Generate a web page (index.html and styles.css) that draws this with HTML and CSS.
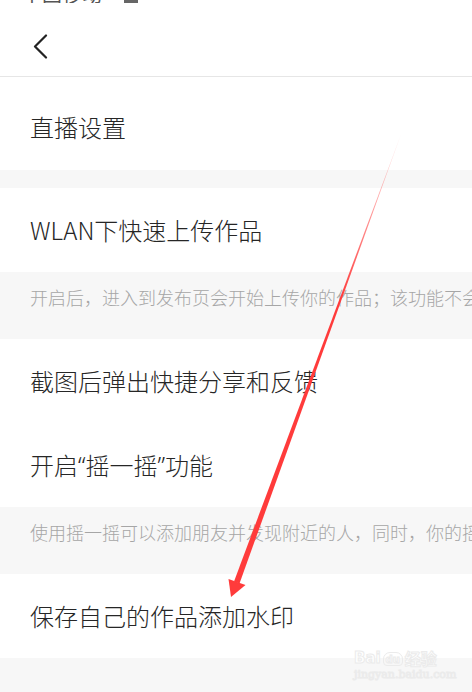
FILE: index.html
```html
<!DOCTYPE html>
<html lang="zh-CN">
<head>
  <meta charset="UTF-8">
  <meta name="viewport" content="width=device-width, initial-scale=1.0">
  <title>通用设置</title>
  <link rel="stylesheet" href="styles.css">
</head>
<body>
  <div class="page">
    <!-- status bar, mostly cut off at the top -->
    <div class="status-bar">
      <span class="carrier">中国移动</span>
      <span class="battery"></span>
    </div>

    <div class="header">
      <svg class="back" width="16" height="26" viewBox="0 0 16 26">
        <polyline points="13,1.5 2,12.5 13,23.5" fill="none" stroke="#222" stroke-width="2.2" stroke-linecap="round" stroke-linejoin="round"/>
      </svg>
    </div>

    <div class="row row-first">直播设置</div>
    <div class="spacer"></div>

    <div class="row">WLAN下快速上传作品</div>
    <div class="desc">开启后，进入到发布页会开始上传你的作品；该功能不会消耗你的流量</div>

    <div class="row">截图后弹出快捷分享和反馈</div>
    <div class="row">开启<span class="q">“</span>摇一摇<span class="q">”</span>功能</div>
    <div class="desc">使用摇一摇可以添加朋友并发现附近的人，同时，你的摇一摇记录将会保留</div>

    <div class="row">保存自己的作品添加水印</div>
    <div class="footer"></div>

    <!-- annotation arrow drawn over the screenshot -->
    <svg class="arrow" width="472" height="692" viewBox="0 0 472 692">
      <defs>
        <linearGradient id="fade" gradientUnits="userSpaceOnUse" x1="401" y1="133" x2="340" y2="300">
          <stop offset="0" stop-color="#ff3b3b" stop-opacity="0.1"/>
          <stop offset="1" stop-color="#ff3b3b" stop-opacity="1"/>
        </linearGradient>
      </defs>
      <polygon points="401.5,133 239.5,583.5 234,581.5" fill="url(#fade)"/>
      <polygon points="228.5,579 245.5,585 231,597" fill="#ff3b3b"/>
    </svg>

    <!-- watermark -->
    <div class="watermark">
      <div class="wm-top">
        <span class="wm-bai">Bai</span>
        <span class="wm-paw">du</span>
        <span class="wm-jy">经验</span>
      </div>
      <div class="wm-url">jingyan.baidu.com</div>
    </div>
  </div>
</body>
</html>
```

FILE: styles.css
```css
body {
  margin: 0;
  font-family: "Noto Sans CJK SC", "Noto Sans", sans-serif;
  background: #fff;
  color: #222;
}

.page {
  position: relative;
  width: 472px;
  height: 692px;
  overflow: hidden;
  background: #f7f7f7;
}

.status-bar {
  height: 3px;
  overflow: hidden;
  background: #fff;
  display: flex;
  align-items: flex-end;
  padding-left: 22px;
  gap: 22px;
}

.carrier {
  font-size: 20px;
  line-height: 20px;
  color: #555;
  margin-bottom: -1px;
  flex: none;
}

.battery {
  width: 14px;
  height: 3px;
  background: #666;
  flex: none;
}

.header {
  height: 74px;
  background: #fff;
  border-bottom: 1px solid #e6e6e6;
  display: flex;
  align-items: center;
  padding-left: 33px;
  padding-top: 14px;
  box-sizing: border-box;
}

.back {
  display: block;
}

.row {
  height: 84px;
  background: #fff;
  display: flex;
  align-items: center;
  padding-left: 30px;
  font-size: 24px;
  line-height: 24px;
  font-weight: 300;
  color: #262626;
  white-space: nowrap;
}

.row-first {
  height: 93px;
  box-sizing: border-box;
  padding-top: 6px;
}

.q {
  font-family: "Noto Sans", sans-serif;
}

.spacer {
  height: 18px;
}

.desc {
  height: 67px;
  box-sizing: border-box;
  padding: 14px 0 0 30px;
  font-size: 18px;
  line-height: 22px;
  font-weight: 300;
  color: #a6a6a6;
  white-space: nowrap;
  overflow: hidden;
}

.footer {
  height: 33px;
}

.arrow {
  position: absolute;
  left: 0;
  top: 0;
  pointer-events: none;
}

.watermark {
  position: absolute;
  left: 354px;
  top: 640px;
  color: #fff;
  -webkit-text-stroke: 1px #ebebeb;
}

.wm-top {
  display: flex;
  align-items: flex-end;
  height: 26px;
}

.wm-bai {
  font-family: "DejaVu Sans", sans-serif;
  font-weight: bold;
  font-size: 15px;
  line-height: 15px;
}

.wm-paw {
  width: 20px;
  height: 14px;
  margin: 0 2px;
  border-radius: 7px 7px 4px 4px;
  border: 1px solid #ebebeb;
  font-family: "DejaVu Sans", sans-serif;
  font-weight: bold;
  font-size: 10px;
  line-height: 14px;
  text-align: center;
  box-sizing: border-box;
}

.wm-jy {
  font-size: 16px;
  line-height: 16px;
  font-weight: bold;
}

.wm-url {
  font-family: "DejaVu Serif", serif;
  font-size: 11px;
  line-height: 16px;
  margin-top: 1px;
}
```
